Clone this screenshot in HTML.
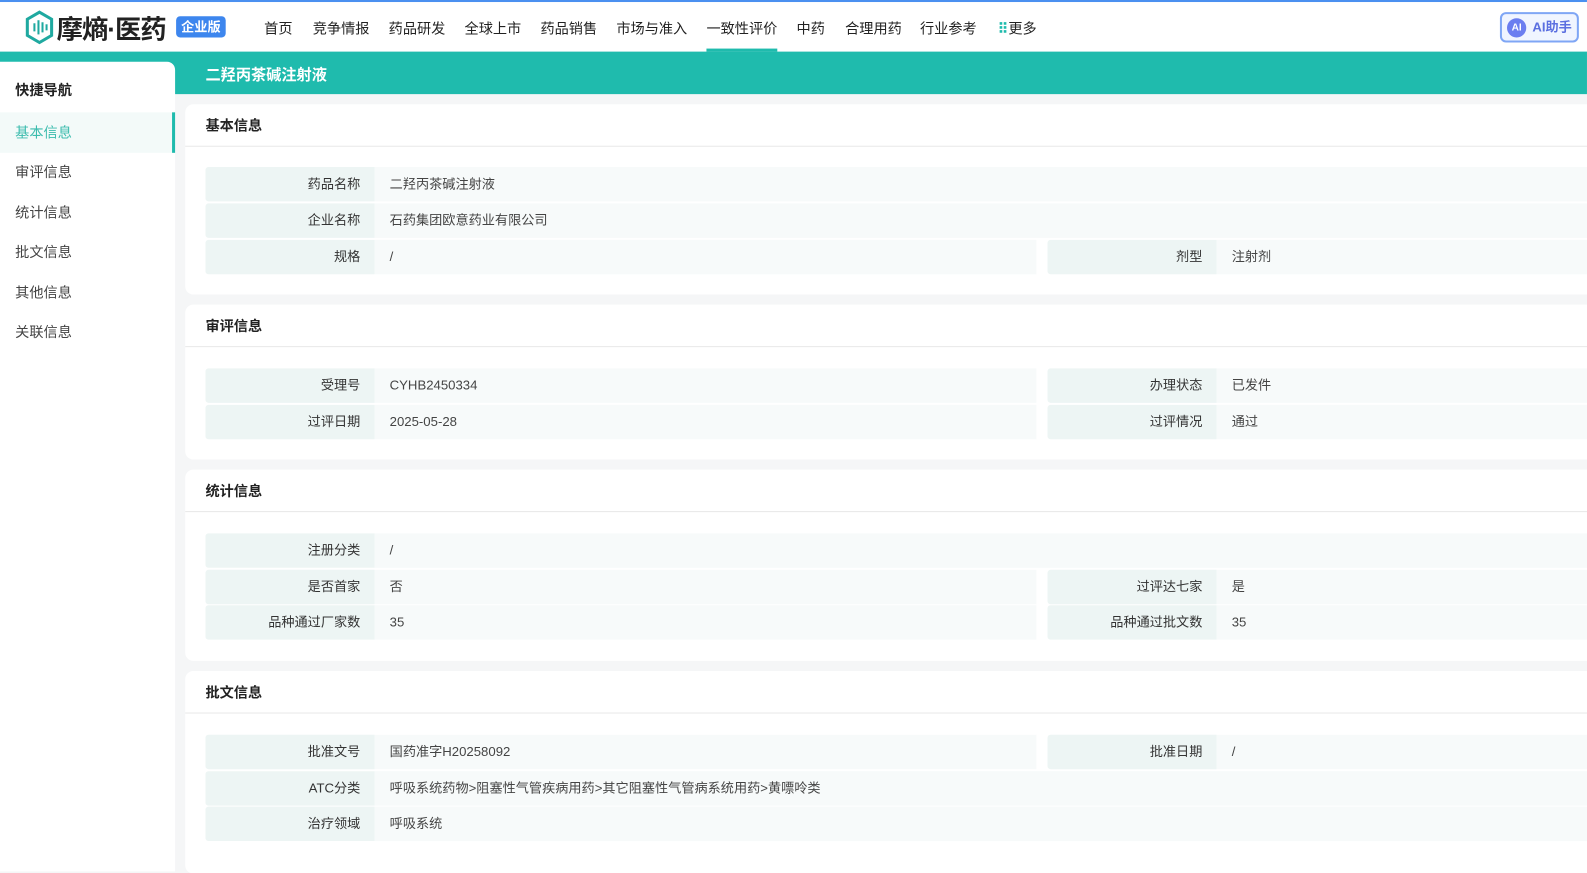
<!DOCTYPE html>
<html><head><meta charset="utf-8"><style>
*{margin:0;padding:0;box-sizing:border-box}
body{width:1587px;height:856px;overflow:hidden;background:#f5f6f7;font-family:"Liberation Sans","Noto Sans CJK SC",sans-serif;color:#333;position:relative}
#w{position:absolute;left:0;top:0;width:1568px;height:846px;transform:scale(1.0121);transform-origin:0 0}
.top{position:absolute;left:0;top:0;width:1568px;height:51px;background:#fff;border-top:2px solid #4a90f0}
.nav a{position:absolute;top:16px;font-size:14px;color:#222;white-space:nowrap}
.band{position:absolute;left:0;top:51px;width:1568px;height:42px;background:#1fbbad}
.band h1{position:absolute;left:203px;top:12px;font-size:15px;color:#fff;font-weight:bold}
.side{position:absolute;left:0;top:61px;width:173px;height:800px;background:#fff;border-radius:0 8px 0 0}
.side .t{position:absolute;left:15px;top:18px;font-size:14px;font-weight:bold;color:#222}
.side .i{position:absolute;left:0;width:173px;height:40px;line-height:40px;padding-left:15px;font-size:14px;color:#444}
.side .act{background:#f3faf9;color:#3cbcae;border-right:3px solid #1fbbad}
.card{position:absolute;left:183px;width:1400px;background:#fff;border-radius:8px}
.card .h{height:42px;line-height:42px;padding-left:20px;font-size:14px;font-weight:bold;color:#222;border-bottom:1px solid #e8e8e8}
.row{position:absolute;height:34px;font-size:13px;color:#444}
.lb{position:absolute;top:0;height:34px;width:167px;background:#edf5f4;text-align:right;padding-right:14px;line-height:34px;color:#333;border-radius:3px 0 0 3px}
.vl{position:absolute;top:0;height:34px;background:#f7fafa;line-height:34px;padding-left:15px}
</style></head><body><div id="w">
<div class="top">
 <svg style="position:absolute;left:24px;top:8px" width="30" height="34" viewBox="0 0 30 34"><path d="M15 2 L27 9 L27 25 L15 32 L3 25 L3 9 Z" fill="none" stroke="#1fa9a0" stroke-width="3"/><g fill="#1fa9a0"><rect x="9" y="13" width="2" height="8"/><rect x="13" y="10" width="2" height="14"/><rect x="17" y="12" width="2" height="10"/><rect x="21" y="14" width="2" height="6"/></g></svg>
 <div style="position:absolute;left:56px;top:7px;font-size:26px;font-weight:bold;color:#222;letter-spacing:-1px">摩熵·医药</div>
 <div style="position:absolute;left:174px;top:14px;width:49px;height:21px;background:#3d86ee;border-radius:4px;color:#fff;font-size:13px;font-weight:bold;line-height:21px;text-align:center">企业版</div>
 <div class="nav">
  <a style="left:261px">首页</a><a style="left:309px">竞争情报</a><a style="left:384px">药品研发</a><a style="left:459px">全球上市</a><a style="left:534px">药品销售</a><a style="left:609px">市场与准入</a><a style="left:698px">一致性评价</a><a style="left:787px">中药</a><a style="left:835px">合理用药</a><a style="left:909px">行业参考</a><a style="left:986px"><span style="color:#1fbbad;font-weight:bold">⠿</span>更多</a>
 </div>
 <div style="position:absolute;left:698px;top:46px;width:70px;height:3px;background:#1fbbad"></div>
 <div style="position:absolute;left:1482px;top:10px;width:78px;height:30px;border:2px solid #7fa6f5;border-radius:6px;background:#f0f5ff;color:#5b6fe0;font-size:13px;font-weight:bold;line-height:26px;padding-left:30px">AI助手
  <div style="position:absolute;left:5px;top:4px;width:19px;height:19px;border-radius:50%;background:#6b7ef0;color:#fff;font-size:10px;line-height:19px;text-align:center;padding:0">AI</div></div>
</div>
<div class="band"><h1>二羟丙茶碱注射液</h1></div>
<div class="side"><div class="t">快捷导航</div>
 <div class="i act" style="top:50px">基本信息</div><div class="i" style="top:89px">审评信息</div><div class="i" style="top:129px">统计信息</div><div class="i" style="top:168px">批文信息</div><div class="i" style="top:208px">其他信息</div><div class="i" style="top:247px">关联信息</div>
</div>

<div class="card" style="top:103px;height:188px"><div class="h">基本信息</div>
 <div class="row" style="top:62px;left:20px;width:1380px"><div class="lb">药品名称</div><div class="vl" style="left:167px;right:0">二羟丙茶碱注射液</div></div>
 <div class="row" style="top:98px;left:20px;width:1380px"><div class="lb">企业名称</div><div class="vl" style="left:167px;right:0">石药集团欧意药业有限公司</div></div>
 <div class="row" style="top:134px;left:20px;width:1380px"><div class="lb">规格</div><div class="vl" style="left:167px;width:654px">/</div><div class="lb" style="left:832px">剂型</div><div class="vl" style="left:999px;right:0">注射剂</div></div>
</div>

<div class="card" style="top:301px;height:153px"><div class="h">审评信息</div>
 <div class="row" style="top:63px;left:20px;width:1380px"><div class="lb">受理号</div><div class="vl" style="left:167px;width:654px">CYHB2450334</div><div class="lb" style="left:832px">办理状态</div><div class="vl" style="left:999px;right:0">已发件</div></div>
 <div class="row" style="top:99px;left:20px;width:1380px"><div class="lb">过评日期</div><div class="vl" style="left:167px;width:654px">2025-05-28</div><div class="lb" style="left:832px">过评情况</div><div class="vl" style="left:999px;right:0">通过</div></div>
</div>

<div class="card" style="top:464px;height:189px"><div class="h">统计信息</div>
 <div class="row" style="top:63px;left:20px;width:1380px"><div class="lb">注册分类</div><div class="vl" style="left:167px;right:0">/</div></div>
 <div class="row" style="top:99px;left:20px;width:1380px"><div class="lb">是否首家</div><div class="vl" style="left:167px;width:654px">否</div><div class="lb" style="left:832px">过评达七家</div><div class="vl" style="left:999px;right:0">是</div></div>
 <div class="row" style="top:134px;left:20px;width:1380px"><div class="lb">品种通过厂家数</div><div class="vl" style="left:167px;width:654px">35</div><div class="lb" style="left:832px">品种通过批文数</div><div class="vl" style="left:999px;right:0">35</div></div>
</div>

<div class="card" style="top:663px;height:200px"><div class="h">批文信息</div>
 <div class="row" style="top:63px;left:20px;width:1380px"><div class="lb">批准文号</div><div class="vl" style="left:167px;width:654px">国药准字H20258092</div><div class="lb" style="left:832px">批准日期</div><div class="vl" style="left:999px;right:0">/</div></div>
 <div class="row" style="top:99px;left:20px;width:1380px"><div class="lb">ATC分类</div><div class="vl" style="left:167px;right:0">呼吸系统药物&gt;阻塞性气管疾病用药&gt;其它阻塞性气管病系统用药&gt;黄嘌呤类</div></div>
 <div class="row" style="top:134px;left:20px;width:1380px"><div class="lb">治疗领域</div><div class="vl" style="left:167px;right:0">呼吸系统</div></div>
</div>
</div></body></html>
